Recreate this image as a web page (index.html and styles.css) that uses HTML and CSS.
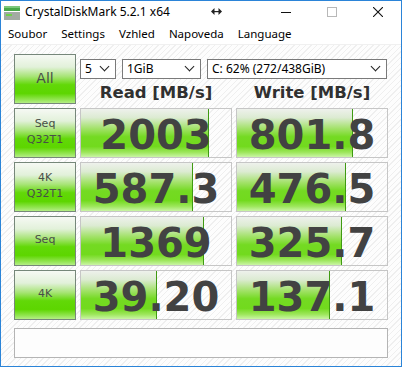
FILE: index.html
```html
<!DOCTYPE html>
<html lang="cs">
<head>
  <meta charset="UTF-8">
  <title>CrystalDiskMark 5.2.1 x64</title>
  <link rel="stylesheet" href="styles.css">
</head>
<body>
  <div class="window">
    <div class="titlebar">
      <svg class="app-icon" width="16" height="14" viewBox="0 0 16 14">
        <rect x="0" y="0" width="16" height="5" fill="#48a848"/>
        <rect x="0" y="0" width="16" height="2" fill="#7cc87c"/>
        <rect x="0" y="6" width="16" height="8" fill="#a3aba3"/>
        <rect x="2" y="8" width="6" height="2" fill="#6fd04a"/>
      </svg>
      <span class="title">CrystalDiskMark 5.2.1 x64</span>
      <svg class="resize" width="11" height="7" viewBox="0 0 11 7">
        <polygon points="0,3.5 3.5,0 3.5,7" fill="#222"/>
        <polygon points="11,3.5 7.5,0 7.5,7" fill="#222"/>
        <rect x="3" y="3" width="5" height="1.2" fill="#222"/>
      </svg>
      <div class="controls">
        <div class="ctl">
          <svg width="10" height="10" viewBox="0 0 10 10"><rect x="0" y="5" width="10" height="1" fill="#111"/></svg>
        </div>
        <div class="ctl">
          <svg width="10" height="10" viewBox="0 0 10 10"><rect x="0.5" y="0.5" width="9" height="9" fill="none" stroke="#b8b8b8"/></svg>
        </div>
        <div class="ctl">
          <svg width="10" height="10" viewBox="0 0 10 10"><path d="M0 0 L10 10 M10 0 L0 10" stroke="#111" stroke-width="1.1"/></svg>
        </div>
      </div>
    </div>

    <div class="menubar">
      <span class="menu-item">Soubor</span>
      <span class="menu-item">Settings</span>
      <span class="menu-item">Vzhled</span>
      <span class="menu-item">Napoveda</span>
      <span class="menu-item">Language</span>
    </div>

    <div class="main">
      <div class="grid">
        <div class="btn btn-all">All</div>
        <div class="top">
          <div class="selects">
            <div class="select sel-count">5</div>
            <div class="select sel-size">1GiB</div>
            <div class="select sel-drive">C: 62% (272/438GiB)</div>
          </div>
          <div class="heads">
            <div class="head">Read [MB/s]</div>
            <div class="head">Write [MB/s]</div>
          </div>
        </div>

        <div class="btn">Seq<br>Q32T1</div>
        <div class="value"><div class="fill" style="width: 128px"></div><span class="num">2003</span></div>
        <div class="value"><div class="fill" style="width: 116px"></div><span class="num">801.8</span></div>

        <div class="btn">4K<br>Q32T1</div>
        <div class="value"><div class="fill" style="width: 112px"></div><span class="num">587.3</span></div>
        <div class="value"><div class="fill" style="width: 109px"></div><span class="num">476.5</span></div>

        <div class="btn">Seq</div>
        <div class="value"><div class="fill" style="width: 123px"></div><span class="num">1369</span></div>
        <div class="value"><div class="fill" style="width: 105px"></div><span class="num">325.7</span></div>

        <div class="btn">4K</div>
        <div class="value"><div class="fill" style="width: 76px"></div><span class="num">39.20</span></div>
        <div class="value"><div class="fill" style="width: 93px"></div><span class="num">137.1</span></div>
      </div>
      <div class="comment"></div>
    </div>
  </div>
</body>
</html>
```

FILE: styles.css
```css
body {
  margin: 0;
  padding: 0;
  background-color: #ffffff;
}
.window {
  width: 402px;
  height: 367px;
  box-sizing: border-box;
  border: 1px solid #2b84d8;
  background-color: #ffffff;
  display: flex;
  flex-direction: column;
}
.titlebar {
  height: 22px;
  display: flex;
  align-items: center;
  padding-left: 3px;
  font-family: "Noto Sans", sans-serif;
  font-size: 12px;
  color: #000;
}
.app-icon {
  margin-top: 1px;
  flex: 0 0 auto;
}
.title {
  flex: 0 0 auto;
  width: 186px;
  padding-left: 5px;
  margin-top: -1px;
  white-space: nowrap;
}
.resize {
  flex: 0 0 auto;
  margin-top: -1px;
}
.controls {
  margin-left: auto;
  display: flex;
  height: 22px;
}
.ctl {
  width: 46px;
  display: flex;
  align-items: center;
  justify-content: center;
}
.menubar {
  height: 21px;
  display: flex;
  align-items: center;
  padding-left: 0;
  font-family: "Noto Sans", sans-serif;
  font-size: 11.5px;
  color: #000;
  border-bottom: 1px solid #f0f0f0;
}
.menu-item {
  padding: 0 7px;
}
.main {
  flex: 1;
  padding: 9px 13px 0 13px;
  background-color: #fdfdfd;
  background-image: repeating-linear-gradient(135deg, #fdfdfd 0, #fdfdfd 3px, #efefef 3px, #efefef 4px);
}
.grid {
  display: grid;
  grid-template-columns: 62px 152px 152px;
  grid-auto-rows: 50px;
  column-gap: 4px;
  row-gap: 4px;
}
.btn {
  box-sizing: border-box;
  border: 1px solid #76877a;
  background: linear-gradient(to bottom, #f6f9f4 0%, #e2f1da 25%, #a6e474 45%, #62d808 62%, #5dd600 80%, #8fe44c 92%, #b4ee86 100%);
  display: flex;
  align-items: center;
  justify-content: center;
  text-align: center;
  font-family: "DejaVu Sans", sans-serif;
  font-size: 11px;
  line-height: 16px;
  color: #484f48;
  padding-bottom: 3px;
}
.btn-all {
  font-size: 14px;
  padding-bottom: 2px;
}
.top {
  grid-column: 2 / 4;
}
.selects {
  display: flex;
  gap: 6px;
  margin-top: 5px;
}
.select {
  box-sizing: border-box;
  height: 20px;
  border: 1px solid #7a7a7a;
  background: #ffffff;
  font-family: "Noto Sans", sans-serif;
  font-size: 12px;
  line-height: 18px;
  padding-left: 4px;
  color: #000;
  position: relative;
  white-space: nowrap;
}
.select::after {
  content: "";
  position: absolute;
  right: 7px;
  top: 3px;
  width: 6px;
  height: 6px;
  border-right: 1.6px solid #222;
  border-bottom: 1.6px solid #222;
  transform: rotate(45deg);
}
.sel-count {
  width: 36px;
}
.sel-size {
  width: 79px;
}
.sel-drive {
  width: 180px;
}
.heads {
  display: grid;
  grid-template-columns: 152px 152px;
  column-gap: 4px;
  margin-top: 4px;
}
.head {
  text-align: center;
  font-family: "DejaVu Sans", sans-serif;
  font-weight: 700;
  font-size: 16.5px;
  line-height: 20px;
  color: #303030;
}
.value {
  position: relative;
  box-sizing: border-box;
  border: 1px solid #c6c6c6;
  overflow: hidden;
  display: flex;
  align-items: center;
  justify-content: center;
}
.fill {
  position: absolute;
  left: 0;
  top: 0;
  bottom: 0;
  box-sizing: border-box;
  border-right: 1px solid #3f9a12;
  background: linear-gradient(to bottom, #eef1ec 0%, #dcebd2 18%, #a4e26c 40%, #74da22 58%, #72da1e 78%, #9ce65a 90%, #caf5a6 100%);
}
.num {
  position: relative;
  font-family: "DejaVu Sans", sans-serif;
  font-weight: 700;
  font-size: 40px;
  line-height: 48px;
  color: #424242;
  padding-top: 3px;
}
.comment {
  margin-top: 8px;
  height: 30px;
  box-sizing: border-box;
  border: 1px solid #b4b4b4;
  background: #fdfdfd;
}
```
